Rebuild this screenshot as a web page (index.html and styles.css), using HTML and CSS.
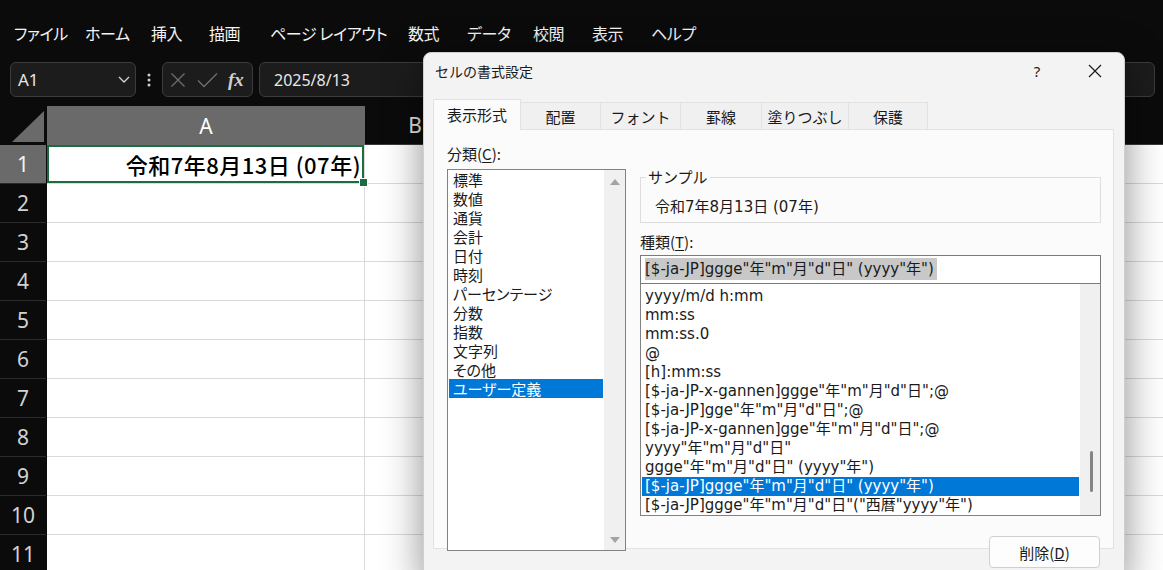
FILE: index.html
```html
<!DOCTYPE html>
<html lang="ja">
<head>
    <meta charset="UTF-8">
    <meta name="viewport" content="width=device-width, initial-scale=1.0">
    <title>セルの書式設定</title>
    <link rel="stylesheet" href="styles.css">
</head>
<body>
    <nav class="menu">
        <span>ファイル</span>
        <span>ホーム</span>
        <span>挿入</span>
        <span>描画</span>
        <span>ページ レイアウト</span>
        <span>数式</span>
        <span>データ</span>
        <span>校閲</span>
        <span>表示</span>
        <span>ヘルプ</span>
    </nav>

    <div class="formula-row">
        <div class="name-box">
            <span>A1</span>
            <svg width="12" height="7" viewBox="0 0 12 7"><path d="M1 1 L6 6 L11 1" fill="none" stroke="#d4d4d4" stroke-width="1.3"/></svg>
        </div>
        <div class="grip">
            <svg width="4" height="14" viewBox="0 0 4 14"><circle cx="2" cy="2" r="1.5"/><circle cx="2" cy="7" r="1.5"/><circle cx="2" cy="12" r="1.5"/></svg>
        </div>
        <div class="fx-box">
            <svg width="16" height="16" viewBox="0 0 16 16"><path d="M1.5 1.5 L14.5 14.5 M14.5 1.5 L1.5 14.5" stroke="#6f6f6f" stroke-width="1.3"/></svg>
            <svg width="21" height="16" viewBox="0 0 21 16"><path d="M1 8.5 L7 14.5 L20 1.5" fill="none" stroke="#6f6f6f" stroke-width="1.3"/></svg>
            <span class="fx">fx</span>
        </div>
        <div class="formula-input">2025/8/13</div>
    </div>

    <div class="sheet">
        <div class="row head-row">
            <div class="corner">
                <svg width="46" height="39" viewBox="0 0 46 39"><path d="M12 36 L44 36 L44 5 Z" fill="#6a6a6a"/></svg>
            </div>
            <div class="col-head col-a active">A</div>
            <div class="col-head col-b">B</div>
            <div class="col-head col-rest"></div>
        </div>
        <div class="row">
            <div class="row-head active">1</div>
            <div class="cell col-a selected">令和7年8月13日 (07年)</div>
            <div class="cell col-b"></div>
            <div class="cell col-rest"></div>
        </div>
        <div class="row"><div class="row-head">2</div><div class="cell col-a"></div><div class="cell col-b"></div><div class="cell col-rest"></div></div>
        <div class="row"><div class="row-head">3</div><div class="cell col-a"></div><div class="cell col-b"></div><div class="cell col-rest"></div></div>
        <div class="row"><div class="row-head">4</div><div class="cell col-a"></div><div class="cell col-b"></div><div class="cell col-rest"></div></div>
        <div class="row"><div class="row-head">5</div><div class="cell col-a"></div><div class="cell col-b"></div><div class="cell col-rest"></div></div>
        <div class="row"><div class="row-head">6</div><div class="cell col-a"></div><div class="cell col-b"></div><div class="cell col-rest"></div></div>
        <div class="row"><div class="row-head">7</div><div class="cell col-a"></div><div class="cell col-b"></div><div class="cell col-rest"></div></div>
        <div class="row"><div class="row-head">8</div><div class="cell col-a"></div><div class="cell col-b"></div><div class="cell col-rest"></div></div>
        <div class="row"><div class="row-head">9</div><div class="cell col-a"></div><div class="cell col-b"></div><div class="cell col-rest"></div></div>
        <div class="row"><div class="row-head">10</div><div class="cell col-a"></div><div class="cell col-b"></div><div class="cell col-rest"></div></div>
        <div class="row"><div class="row-head">11</div><div class="cell col-a"></div><div class="cell col-b"></div><div class="cell col-rest"></div></div>
    </div>

    <!-- Format Cells dialog -->
    <div class="dialog">
        <div class="dialog-title">
            <span class="title-text">セルの書式設定</span>
            <span class="title-btn help">?</span>
            <span class="title-btn close">
                <svg width="14" height="14" viewBox="0 0 14 14"><path d="M1 1 L13 13 M13 1 L1 13" stroke="#1a1a1a" stroke-width="1.2"/></svg>
            </span>
        </div>

        <div class="tabs">
            <div class="tab active">表示形式</div>
            <div class="tab">配置</div>
            <div class="tab">フォント</div>
            <div class="tab">罫線</div>
            <div class="tab">塗りつぶし</div>
            <div class="tab">保護</div>
        </div>

        <div class="panel">
            <div class="category">
                <div class="label">分類(<u>C</u>):</div>
                <div class="listbox cat-list">
                    <ul class="items">
                        <li>標準</li>
                        <li>数値</li>
                        <li>通貨</li>
                        <li>会計</li>
                        <li>日付</li>
                        <li>時刻</li>
                        <li>パーセンテージ</li>
                        <li>分数</li>
                        <li>指数</li>
                        <li>文字列</li>
                        <li>その他</li>
                        <li class="sel">ユーザー定義</li>
                    </ul>
                    <div class="vscroll">
                        <svg width="12" height="8" viewBox="0 0 12 8"><path d="M6 1 L11 7 L1 7 Z" fill="#a3a3a3"/></svg>
                        <svg width="12" height="8" viewBox="0 0 12 8"><path d="M1 1 L11 1 L6 7 Z" fill="#a3a3a3"/></svg>
                    </div>
                </div>
            </div>

            <div class="format">
                <fieldset class="sample">
                    <legend>サンプル</legend>
                    <div class="sample-text">令和7年8月13日 (07年)</div>
                </fieldset>
                <div class="label type-label">種類(<u>T</u>):</div>
                <div class="type-input"><span class="hl">[$-ja-JP]ggge"年"m"月"d"日" (yyyy"年")</span></div>
                <div class="listbox type-list">
                    <ul class="items">
                        <li>yyyy/m/d h:mm</li>
                        <li>mm:ss</li>
                        <li>mm:ss.0</li>
                        <li>@</li>
                        <li>[h]:mm:ss</li>
                        <li>[$-ja-JP-x-gannen]ggge"年"m"月"d"日";@</li>
                        <li>[$-ja-JP]gge"年"m"月"d"日";@</li>
                        <li>[$-ja-JP-x-gannen]gge"年"m"月"d"日";@</li>
                        <li>yyyy"年"m"月"d"日"</li>
                        <li>ggge"年"m"月"d"日" (yyyy"年")</li>
                        <li class="sel">[$-ja-JP]ggge"年"m"月"d"日" (yyyy"年")</li>
                        <li>[$-ja-JP]ggge"年"m"月"d"日"("西暦"yyyy"年")</li>
                    </ul>
                    <div class="vscroll thin"><span class="thumb"></span></div>
                </div>
                <div class="actions">
                    <button class="btn">削除(<u>D</u>)</button>
                </div>
            </div>
        </div>
    </div>
</body>
</html>
```

FILE: styles.css
```css
* {
    padding: 0;
    margin: 0;
    box-sizing: border-box;
}
body {
    position: relative;
    width: 1163px;
    height: 570px;
    overflow: hidden;
    background-color: #0b0b0b;
    font-family: "Noto Sans CJK JP", sans-serif;
    color: #fff;
}

/* ribbon tabs */
.menu {
    display: grid;
    grid-template-columns: 71px 66px 58px 61px 138px 59px 66px 59px 59px auto;
    align-items: center;
    height: 52px;
    padding: 13px 0 0 14px;
    font-size: 16px;
    letter-spacing: -0.4px;
    font-feature-settings: "palt";
    color: #f4f4f4;
    white-space: nowrap;
}

/* formula bar */
.formula-row {
    display: flex;
    height: 35px;
    margin-top: 10px;
    padding-left: 10px;
}
.name-box,
.fx-box,
.formula-input {
    display: flex;
    align-items: center;
    height: 35px;
    background-color: #1c1c1c;
    border: 1px solid #3c3c3c;
    border-radius: 6px;
}
.name-box {
    width: 126px;
    justify-content: space-between;
    padding: 0 5px 0 7px;
    font-family: "Noto Sans", sans-serif;
    font-size: 17px;
    color: #e6e6e6;
}
.grip {
    display: flex;
    align-items: center;
    justify-content: center;
    width: 26px;
    fill: #cfcfcf;
}
.fx-box {
    width: 91px;
    padding-left: 7px;
    gap: 11px;
}
.fx {
    font-family: "Liberation Serif", serif;
    font-style: italic;
    font-weight: bold;
    font-size: 19px;
    color: #cfcfcf;
    margin-left: -1px;
}
.formula-input {
    flex: 1;
    margin: 0 8px 0 6px;
    padding-left: 14px;
    font-family: "Noto Sans", sans-serif;
    font-size: 16px;
    color: #e8e8e8;
}

/* grid */
.sheet {
    margin-top: 9px;
}
.row {
    display: flex;
    height: 39px;
}
.corner {
    width: 47px;
}
.col-head {
    display: flex;
    align-items: center;
    justify-content: center;
    font-family: "Noto Sans", sans-serif;
    font-size: 21px;
    color: #e4e4e4;
    border-bottom: 1px solid #3a3a3a;
}
.col-head.active {
    background-color: #6a6a6a;
    color: #fff;
    border-bottom: none;
}
.col-a {
    width: 318px;
}
.col-b {
    width: 100px;
}
.col-rest {
    flex: 1;
}
.row-head {
    display: flex;
    align-items: center;
    justify-content: center;
    width: 46px;
    margin-right: 1px;
    border-bottom: 1px solid #2a2a2a;
    font-family: "Noto Sans", sans-serif;
    font-size: 21px;
    color: #d2d2d2;
}
.row-head.active {
    background-color: #6a6a6a;
    color: #f2f2f2;
}
.cell {
    background-color: #fff;
    border-bottom: 1px solid #dadada;
    border-right: 1px solid #dadada;
}
.cell.col-rest {
    border-right: none;
}
.cell.selected {
    position: relative;
    display: flex;
    align-items: center;
    justify-content: flex-end;
    padding-right: 3px;
    box-shadow: inset 0 0 0 2px #1d6b41;
    font-size: 22px;
    letter-spacing: 0.5px;
    font-weight: 500;
    color: #000;
}
.cell.selected::after {
    content: "";
    position: absolute;
    right: -4px;
    bottom: -4px;
    width: 7px;
    height: 7px;
    background-color: #1d6b41;
    border: 1px solid #fff;
}

/* dialog */
.dialog {
    position: absolute;
    left: 423px;
    top: 52px;
    width: 702px;
    height: 530px;
    background-color: #f3f3f3;
    border: 1px solid #cfcfcf;
    border-radius: 8px 8px 0 0;
    box-shadow: 0 8px 40px rgba(0, 0, 0, 0.45);
    color: #1a1a1a;
}
.dialog-title {
    display: flex;
    align-items: center;
    height: 35px;
    padding-left: 11px;
    font-size: 14px;
}
.title-text {
    flex: 1;
}
.title-btn {
    display: flex;
    align-items: center;
    justify-content: center;
    width: 46px;
    height: 35px;
}
.title-btn.help {
    margin-right: 12px;
    font-family: "Noto Sans", sans-serif;
    font-size: 15px;
}
.title-btn.close {
    margin-right: 6px;
}
.tabs {
    display: flex;
    align-items: flex-end;
    height: 30px;
    margin-top: 11px;
    padding-left: 9px;
}
.tab {
    display: flex;
    align-items: center;
    justify-content: center;
    height: 27px;
    background-color: #f0f0f0;
    border: 1px solid #e2e2e2;
    border-bottom: none;
    margin-left: -1px;
    font-size: 15px;
}
.tab:nth-child(1) { width: 88px; }
.tab:nth-child(2) { width: 81px; }
.tab:nth-child(3) { width: 81px; }
.tab:nth-child(4) { width: 82px; }
.tab:nth-child(5) { width: 88px; }
.tab:nth-child(6) { width: 80px; }
.tab.active {
    position: relative;
    z-index: 1;
    height: 31px;
    margin-left: 0;
    margin-bottom: -1px;
    padding-bottom: 2px;
    background-color: #fbfbfb;
}
.panel {
    display: flex;
    gap: 14px;
    height: 420px;
    margin: 0 10px 0 9px;
    padding: 14px 12px 0 13px;
    background-color: #fbfbfb;
    border: 1px solid #e2e2e2;
}
.label {
    font-size: 15px;
    line-height: 20px;
}
.label u {
    text-underline-offset: 2px;
}
.category {
    width: 179px;
}
.listbox {
    display: flex;
    background-color: #fff;
    border: 1px solid #828282;
}
.items {
    flex: 1;
    list-style: none;
    font-size: 15px;
    line-height: 19px;
}
.items li {
    white-space: nowrap;
}
.items li.sel {
    background-color: #0078d7;
    color: #fff;
}
.cat-list {
    height: 382px;
    margin-top: 5px;
}
.cat-list .items {
    padding: 0 1px 0 1px;
    font-feature-settings: "palt";
}
.cat-list .items li {
    padding-left: 4px;
}
.vscroll {
    display: flex;
    flex-direction: column;
    align-items: center;
    justify-content: space-between;
    width: 21px;
    padding: 8px 0 6px;
    background-color: #f0f0f0;
}
.format {
    flex: 1;
}
.sample {
    margin-top: 25px;
    height: 54px;
    padding: 0 14px;
    border: 1px solid #dedede;
}
.sample legend {
    margin-left: -9px;
    padding: 0 2px;
    font-size: 15px;
    line-height: 16px;
}
.sample-text,
.type-input,
.type-list .items {
    font-family: "DejaVu Sans", "Noto Sans CJK JP", sans-serif;
    font-size: 15px;
}
.sample-text {
    margin-top: 12px;
    line-height: 20px;
}
.type-label {
    margin-top: 9px;
}
.type-input {
    height: 29px;
    margin-top: 3px;
    padding: 2px 3px 0 4px;
    background-color: #fff;
    border: 1px solid #7a7a7a;
    line-height: 22px;
}
.type-input .hl {
    display: inline-block;
    background-color: #c8c8c8;
    padding-right: 3px;
}
.type-list {
    height: 232px;
    border-top: none;
}
.type-list .items {
    padding: 3px 1px 0 1px;
}
.type-list .items li {
    padding-left: 3px;
}
.vscroll.thin {
    justify-content: flex-start;
    width: 20px;
    padding: 167px 0 0 2px;
}
.thumb {
    display: block;
    width: 3px;
    height: 41px;
    border-radius: 2px;
    background-color: #858585;
}
.actions {
    display: flex;
    justify-content: flex-end;
    margin-top: 20px;
    padding-right: 1px;
}
.btn {
    width: 111px;
    height: 32px;
    background-color: #fdfdfd;
    border: 1px solid #d0d0d0;
    border-radius: 4px;
    font-family: "Noto Sans CJK JP", sans-serif;
    font-size: 15px;
    color: #1a1a1a;
}
```
